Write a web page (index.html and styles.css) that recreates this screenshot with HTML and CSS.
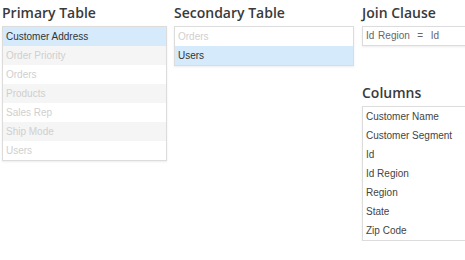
FILE: index.html
```html
<!DOCTYPE html>
<html>
<head>
    <title>Join Tables</title>
    <link rel="stylesheet" href="styles.css">
</head>
<body>
    <div class="container">
        <div class="panel primary">
            <h3>Primary Table</h3>
            <ul class="list striped">
                <li class="selected">Customer Address</li>
                <li class="off">Order Priority</li>
                <li class="off">Orders</li>
                <li class="off">Products</li>
                <li class="off">Sales Rep</li>
                <li class="off">Ship Mode</li>
                <li class="off">Users</li>
            </ul>
        </div>
        <div class="panel secondary">
            <h3>Secondary Table</h3>
            <ul class="list">
                <li class="off">Orders</li>
                <li class="selected">Users</li>
            </ul>
        </div>
        <div class="panel join">
            <h3>Join Clause</h3>
            <div class="clause">Id Region&nbsp; = &nbsp;Id</div>
            <h3 class="columns-title">Columns</h3>
            <ul class="list">
                <li>Customer Name</li>
                <li>Customer Segment</li>
                <li>Id</li>
                <li>Id Region</li>
                <li>Region</li>
                <li>State</li>
                <li>Zip Code</li>
            </ul>
        </div>
    </div>
</body>
</html>
```

FILE: styles.css
```css
body { margin: 0; padding: 0 2px; overflow: hidden; font-family: "Liberation Sans", Arial, sans-serif; }
.container { display: flex; gap: 7px; width: 480px; }
.panel { flex: none; }
.primary { width: 165px; }
.secondary { width: 180px; }
.join { width: 112px; margin-left: 1px; }
h3 {
    font-family: "Open Sans", sans-serif;
    font-size: 14px;
    font-weight: 600;
    color: #3a3a3a;
    margin: 3px 0 3px 0;
    line-height: 20px;
}
.list {
    list-style: none;
    margin: 0;
    padding: 0;
    border: 1px solid #dcdcdc;
    box-shadow: 0 1px 2px rgba(0,0,0,0.08);
    background: #fff;
}
.list li {
    height: 19px;
    line-height: 19px;
    font-size: 10px;
    color: #444;
    padding-left: 3px;
    white-space: nowrap;
}
.striped li:nth-child(even) { background-color: #f5f5f5; }
.list li.off { color: #cfcfcf; }
.list li.selected { background-color: #d5ebfb; color: #333; }
.clause {
    height: 18px;
    line-height: 18px;
    border: 1px solid #dcdcdc;
    box-shadow: 0 1px 2px rgba(0,0,0,0.08);
    font-size: 10px;
    color: #666;
    padding-left: 3px;
    word-spacing: 1px;
}
.columns-title { margin-top: 37px; margin-bottom: 3px; }
```
